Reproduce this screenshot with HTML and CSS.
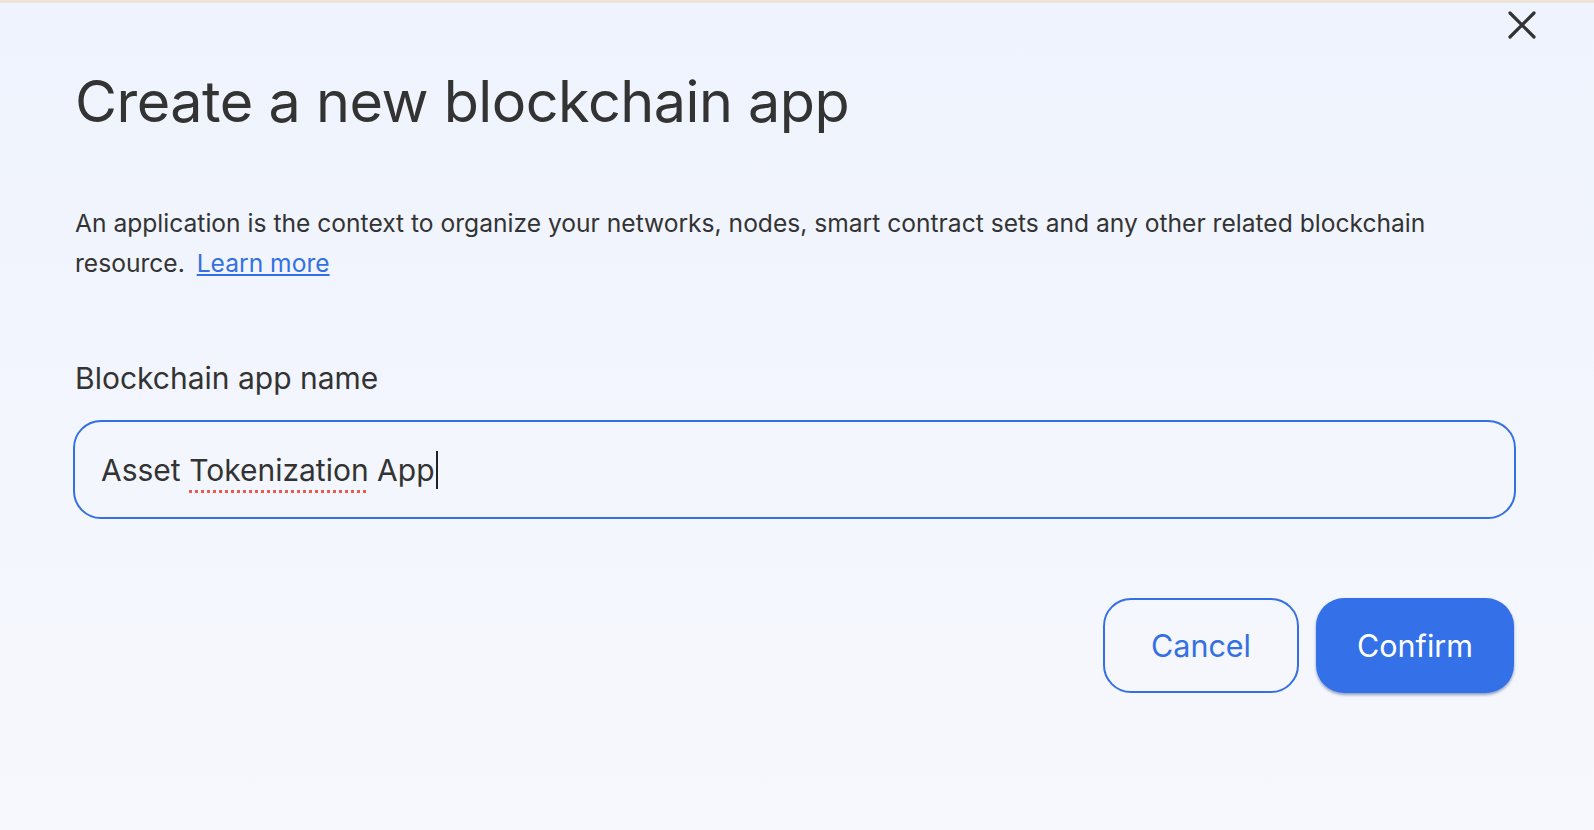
FILE: index.html
```html
<!DOCTYPE html>
<html lang="en">
<head>
<meta charset="utf-8">
<title>Create a new blockchain app</title>
<link rel="stylesheet" href="styles.css">
</head>
<body>
<div class="dialog">
  <button class="close" aria-label="Close">
    <svg width="28" height="28" viewBox="0 0 28 28"><path d="M2 2 L26 26 M26 2 L2 26" stroke="#333" stroke-width="3.2" stroke-linecap="round" fill="none"/></svg>
  </button>
  <h1 class="title">Create a new blockchain app</h1>
  <p class="desc">An application is the context to organize your networks, nodes, smart contract sets and any other related blockchain resource. <a href="#" class="link">Learn more</a></p>
  <label class="label">Blockchain app name</label>
  <div class="field"><span class="value">Asset <span class="spell">Tokenization</span> App</span><span class="caret"></span></div>
  <div class="actions">
    <button class="btn btn-outline">Cancel</button>
    <button class="btn btn-primary">Confirm</button>
  </div>
</div>
</body>
</html>
```
FILE: styles.css
```css
html, body {
  margin: 0;
  padding: 0;
}
body {
  font-family: "Inter", "Roboto", sans-serif;
  color: #333;
}
.dialog {
  position: relative;
  box-sizing: border-box;
  height: 830px;
  border-top: 3px solid #ece4d8;
  background: linear-gradient(180deg, #eff3fd 0%, #f3f6fd 60%, #f7f8fd 100%);
  padding: 0 80px 0 75px;
  display: flex;
  flex-direction: column;
}
.close {
  position: absolute;
  top: 8px;
  right: 58px;
  border: 0;
  background: transparent;
  padding: 0;
  width: 28px;
  height: 28px;
  cursor: pointer;
}
.title {
  margin: 58px 0 0;
  font-size: 57.5px;
  font-weight: 400;
  line-height: 80px;
  color: #333;
  letter-spacing: -0.5px;
}
.desc {
  margin: 62px 0 0;
  max-width: 1400px;
  font-size: 24.6px;
  line-height: 40px;
  color: #333;
}
.link {
  margin-left: 5px;
  color: #3470e4;
  text-decoration: underline;
}
.label {
  margin-top: 77px;
  font-size: 30px;
  line-height: 36px;
}
.field {
  margin-top: 24px;
  box-sizing: border-box;
  height: 99px;
  margin-left: -2px;
  margin-right: -2px;
  border: 2px solid #3470e4;
  border-radius: 28px;
  display: flex;
  align-items: center;
  padding: 0 26px;
  font-size: 30px;
}
.spell {
  text-decoration: underline dotted #ee5a50;
  text-underline-offset: 9px;
  text-decoration-thickness: 2.5px;
}
.caret {
  display: inline-block;
  width: 2px;
  height: 38px;
  background: #222;
  margin-left: 1px;
}
.actions {
  margin-top: 79px;
  display: flex;
  justify-content: flex-end;
  gap: 17px;
}
.btn {
  box-sizing: border-box;
  height: 95px;
  border-radius: 28px;
  font-family: inherit;
  font-size: 30.5px;
  cursor: pointer;
}
.btn-outline {
  width: 196px;
  background: transparent;
  border: 2px solid #3470e4;
  color: #3470e4;
}
.btn-primary {
  width: 198px;
  background: #3470e8;
  border: 0;
  color: #fff;
  box-shadow: 0 2px 3px rgba(20, 50, 130, 0.45);
}
```
